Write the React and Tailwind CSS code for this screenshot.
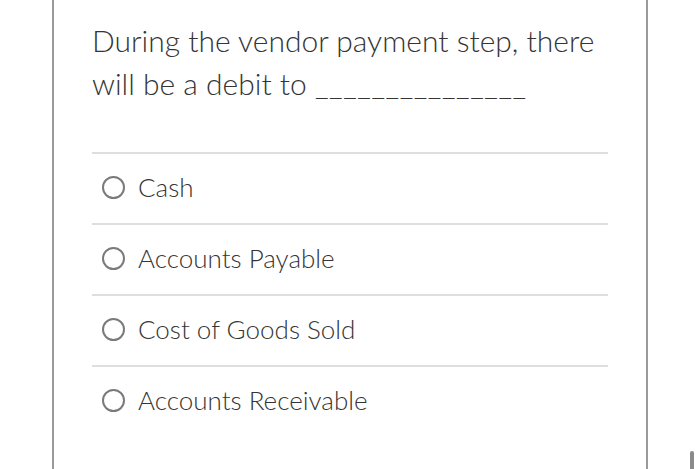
import React from "react";

const options = ["Cash", "Accounts Payable", "Cost of Goods Sold", "Accounts Receivable"];

const Radio = () => (
  <span className="w-[23px] h-[23px] rounded-full border-[2.5px] border-[#7a7a7a] bg-white shrink-0" />
);

export default function App() {
  return (
    <div
      className="relative w-[700px] h-[469px] bg-white overflow-hidden text-[#353535]"
      style={{ fontFamily: "Lato, 'Open Sans', sans-serif" }}
    >
      <div className="ml-[52px] w-[596px] h-full border-x-2 border-[#9a9a9a] pl-[38px] pr-[38px]">
        <p className="pt-[19px] text-[30px] leading-[43px] font-light">
          During the vendor payment step, there will be a debit to{" "}
          <span className="tracking-[0.6px]">_______________</span>
        </p>
        <div className="mt-[47px]">
          {options.map((o) => (
            <div key={o} className="border-t-2 border-[#dedede] h-[71px] flex items-center pl-[10px] gap-[13px] pb-[3px]">
              <Radio />
              <span className="text-[26px] font-light">{o}</span>
            </div>
          ))}
        </div>
      </div>
      <div className="absolute left-[690px] top-[451px] w-[4px] h-[20px] rounded-t-full bg-[#8a8a8a]" />
    </div>
  );
}
